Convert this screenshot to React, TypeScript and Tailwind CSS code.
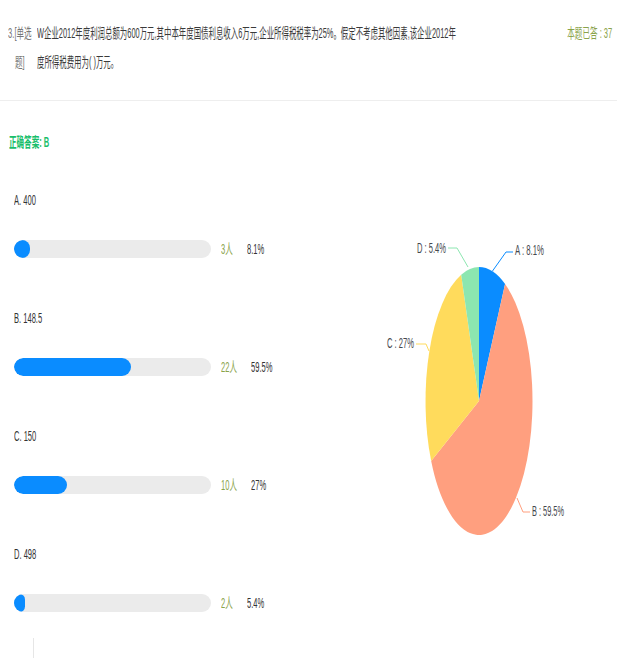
import React from "react";

const FONT = '"Liberation Sans","Noto Sans CJK SC",sans-serif';

type Opt = { label: string; count: string; pct: number; pctText: string; countW: string };

const options: Opt[] = [
  { label: "A. 400", count: "3人", pct: 8.1, pctText: "8.1%", countW: "w-[26px]" },
  { label: "B. 148.5", count: "22人", pct: 59.5, pctText: "59.5%", countW: "w-[30px]" },
  { label: "C. 150", count: "10人", pct: 27, pctText: "27%", countW: "w-[30px]" },
  { label: "D. 498", count: "2人", pct: 5.4, pctText: "5.4%", countW: "w-[26px]" },
];

const CX = 479;
const CY = 401;
const RX = 53.5;
const RY = 134;

function pt(frac: number): [number, number] {
  const a = frac * Math.PI * 2;
  return [CX + RX * Math.sin(a), CY - RY * Math.cos(a)];
}

function slice(from: number, to: number) {
  const [x1, y1] = pt(from);
  const [x2, y2] = pt(to);
  const large = to - from > 0.5 ? 1 : 0;
  return `M${CX} ${CY} L${x1.toFixed(2)} ${y1.toFixed(2)} A${RX} ${RY} 0 ${large} 1 ${x2.toFixed(2)} ${y2.toFixed(2)} Z`;
}

const slices = [
  { from: 0, to: 0.081, color: "#0a8cff" },
  { from: 0.081, to: 0.676, color: "#ff9f7f" },
  { from: 0.676, to: 0.946, color: "#ffdb5c" },
  { from: 0.946, to: 1, color: "#8ce6b0" },
];

function Pie() {
  return (
    <svg width="260" height="506" viewBox="0 0 260 506">
      <g transform="translate(-357,-152)">
        {slices.map((s, i) => (
          <path key={i} d={slice(s.from, s.to)} fill={s.color} />
        ))}
        <polyline points="492.5,271 506,252 513,252" fill="none" stroke="#0a8cff" strokeWidth="1" />
        <polyline points="468,267 457,248 448,248" fill="none" stroke="#8ce6b0" strokeWidth="1" />
        <polyline points="429,351 426,344 416,344" fill="none" stroke="#ffdb5c" strokeWidth="1" />
        <polyline points="517,498 523,512 530,512" fill="none" stroke="#ff9f7f" strokeWidth="1" />
        <g fill="#45474d" fontSize="14" fontFamily={FONT}>
          <text x="515" y="255" textLength="29" lengthAdjust="spacingAndGlyphs">A : 8.1%</text>
          <text x="417" y="253" textLength="29" lengthAdjust="spacingAndGlyphs">D : 5.4%</text>
          <text x="387" y="348" textLength="27" lengthAdjust="spacingAndGlyphs">C : 27%</text>
          <text x="532" y="516" textLength="32" lengthAdjust="spacingAndGlyphs">B : 59.5%</text>
        </g>
      </g>
    </svg>
  );
}

export default function App() {
  return (
    <div
      className="w-[617px] h-[658px] bg-white overflow-hidden text-[14px]"
      style={{ fontFamily: FONT }}
    >
      <header className="flex items-start pt-[19px] pb-[23px] pl-[8px] pr-[5px] border-b border-[#eeeeee]">
        <div className="w-[29px] shrink-0">
          <div className="w-[44px] origin-left scale-x-[0.54] text-center leading-[29px] text-[#777777] whitespace-nowrap">
            <div>3.[单选</div>
            <div>题]</div>
          </div>
        </div>
        <div className="flex-1 min-w-0 leading-[29px] text-[#3a3a3a]">
          <div className="origin-left scale-x-[0.53] whitespace-nowrap">
            W企业2012年度利润总额为600万元,其中本年度国债利息收入6万元,企业所得税税率为25%。假定不考虑其他因素,该企业2012年
          </div>
          <div className="origin-left scale-x-[0.53] whitespace-nowrap">度所得税费用为( )万元。</div>
        </div>
        <div className="shrink-0 origin-right scale-x-[0.54] whitespace-nowrap leading-[29px] text-[#8aa34a]">
          本题已答 : 37
        </div>
      </header>

      <div className="mt-[31px] pl-[9px] leading-[20px]">
        <div className="origin-left scale-x-[0.54] whitespace-nowrap font-bold text-[#19be6b]">正确答案: B</div>
      </div>

      <div className="flex">
        <div className="w-[357px] shrink-0 pl-[14px] pt-[38px]">
          {options.map((o, i) => (
            <div key={o.label} className={i === 0 ? "" : "mt-[50px]"}>
              <div className="h-[20px] leading-[20px] text-[#333333] origin-left scale-x-[0.54] whitespace-nowrap">
                {o.label}
              </div>
              <div className="mt-[30px] flex items-center h-[18px]">
                <div className="w-[197px] h-[18px] rounded-full bg-[#ebebeb] overflow-hidden shrink-0">
                  <div className="h-full rounded-full bg-[#0a8cff]" style={{ width: `${o.pct}%` }} />
                </div>
                <div className={`${o.countW} ml-[10px] shrink-0 leading-[18px]`}>
                  <div className="origin-left scale-x-[0.54] whitespace-nowrap text-[#8aa34a]">{o.count}</div>
                </div>
                <div className="leading-[18px] origin-left scale-x-[0.54] whitespace-nowrap text-[#333333]">
                  {o.pctText}
                </div>
              </div>
            </div>
          ))}
          <div className="mt-[26px] ml-[19px] h-[30px] border-l border-[#e6e6e6]" />
        </div>
        <div className="shrink-0">
          <Pie />
        </div>
      </div>
    </div>
  );
}
